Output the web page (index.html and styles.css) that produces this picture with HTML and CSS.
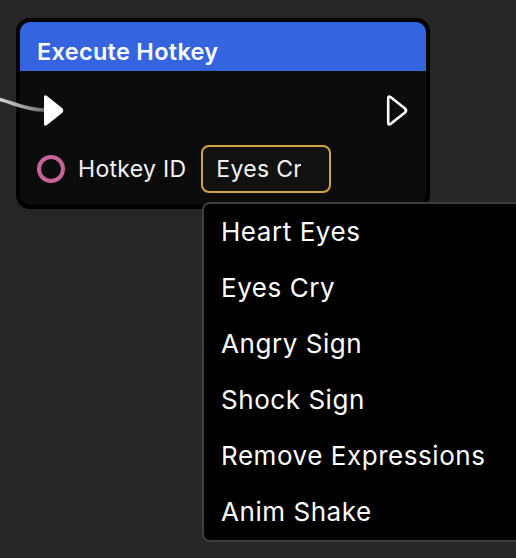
FILE: index.html
```html
<!DOCTYPE html>
<html lang="en">
<head>
    <meta charset="UTF-8">
    <meta name="viewport" content="width=device-width, initial-scale=1.0">
    <title>Execute Hotkey</title>
    <link rel="stylesheet" href="styles.css">
</head>
<body>
    <div class="canvas">
        <div class="node">
            <div class="node-header">Execute Hotkey</div>
            <div class="node-body">
                <div class="exec-row">
                    <svg class="exec-in" width="22" height="33" viewBox="0 0 22 33">
                        <path d="M4 2 L19 14 Q21.5 16.5 19 19 L4 31 Q1 33 1 29.5 L1 3.5 Q1 0 4 2 Z" fill="#fff"/>
                    </svg>
                    <svg class="exec-out" width="23" height="33" viewBox="0 0 23 33">
                        <path d="M4.5 3 L19 14.5 Q21 16.5 19 18.5 L4.5 30 Q2.2 31.5 2.2 28.8 L2.2 4.2 Q2.2 1.5 4.5 3 Z" fill="none" stroke="#fff" stroke-width="2.6" stroke-linejoin="round"/>
                    </svg>
                </div>
                <div class="param-row">
                    <span class="pin"></span>
                    <span class="param-label">Hotkey ID</span>
                    <div class="param-input"><span class="param-value">Eyes Cry</span></div>
                </div>
            </div>
        </div>

        <!-- incoming exec wire, drawn over the node edge -->
        <svg class="wire" width="60" height="40" viewBox="0 0 60 40">
            <defs>
                <linearGradient id="wireFade" x1="0" y1="0" x2="1" y2="0">
                    <stop offset="0" stop-color="#dadada"/>
                    <stop offset="0.35" stop-color="#b4b4b4"/>
                    <stop offset="1" stop-color="#707070"/>
                </linearGradient>
            </defs>
            <path d="M-2 11 C 14 15, 26 22, 44 22" fill="none" stroke="url(#wireFade)" stroke-width="3.5"/>
        </svg>

        <ul class="menu">
            <li>Heart Eyes</li>
            <li>Eyes Cry</li>
            <li>Angry Sign</li>
            <li>Shock Sign</li>
            <li>Remove Expressions</li>
            <li>Anim Shake</li>
        </ul>
    </div>
</body>
</html>
```

FILE: styles.css
```css
html, body {
    margin: 0;
    padding: 0;
    background: #262626;
}
body {
    font-family: Inter, 'Noto Sans', sans-serif;
    color: #f4f4f4;
    width: 516px;
    height: 558px;
    overflow: hidden;
}
.canvas {
    position: relative;
    width: 516px;
    height: 558px;
    padding: 18px 0 0 16px;
    box-sizing: border-box;
    overflow: hidden;
}
.wire {
    position: absolute;
    left: 0;
    top: 88px;
}
.node {
    width: 414px;
    border: 4px solid #000;
    border-radius: 14px;
    background: #0c0c0c;
    overflow: hidden;
    box-sizing: border-box;
}
.node-header {
    height: 49px;
    box-sizing: border-box;
    background: #3464e0;
    color: #fff;
    font-size: 23.5px;
    font-weight: 600;
    letter-spacing: 0.3px;
    line-height: 39px;
    padding: 10px 0 0 17px;
}
.node-body {
    padding: 19px 17px 12px 17px;
    display: flex;
    flex-direction: column;
    gap: 15px;
}
.exec-row {
    height: 40px;
    display: flex;
    align-items: center;
    justify-content: space-between;
    padding-left: 6px;
}
.exec-in, .exec-out {
    display: block;
}
.param-row {
    height: 48px;
    display: flex;
    align-items: center;
}
.pin {
    width: 28px;
    height: 28px;
    border: 4px solid #c8639a;
    border-radius: 50%;
    box-sizing: border-box;
    margin-right: 13px;
}
.param-label {
    font-size: 23px;
    letter-spacing: 0.3px;
    margin-right: 15px;
}
.param-input {
    width: 130px;
    height: 48px;
    box-sizing: border-box;
    border: 2px solid #d2a439;
    border-radius: 8px;
    background: #111;
    font-size: 23px;
    letter-spacing: 0.3px;
    line-height: 44px;
    padding-left: 13px;
}
.param-value {
    display: block;
    width: 85px;
    white-space: nowrap;
    overflow: hidden;
}
.menu {
    position: absolute;
    left: 202px;
    right: 0;
    top: 202px;
    margin: 0;
    padding: 0;
    list-style: none;
    background: #000;
    border: 2px solid #3e3e3e;
    border-right: none;
    border-radius: 8px 0 0 8px;
}
.menu li {
    height: 56px;
    line-height: 56px;
    padding-left: 17px;
    font-size: 26px;
    letter-spacing: 0.55px;
    color: #fff;
}
```
